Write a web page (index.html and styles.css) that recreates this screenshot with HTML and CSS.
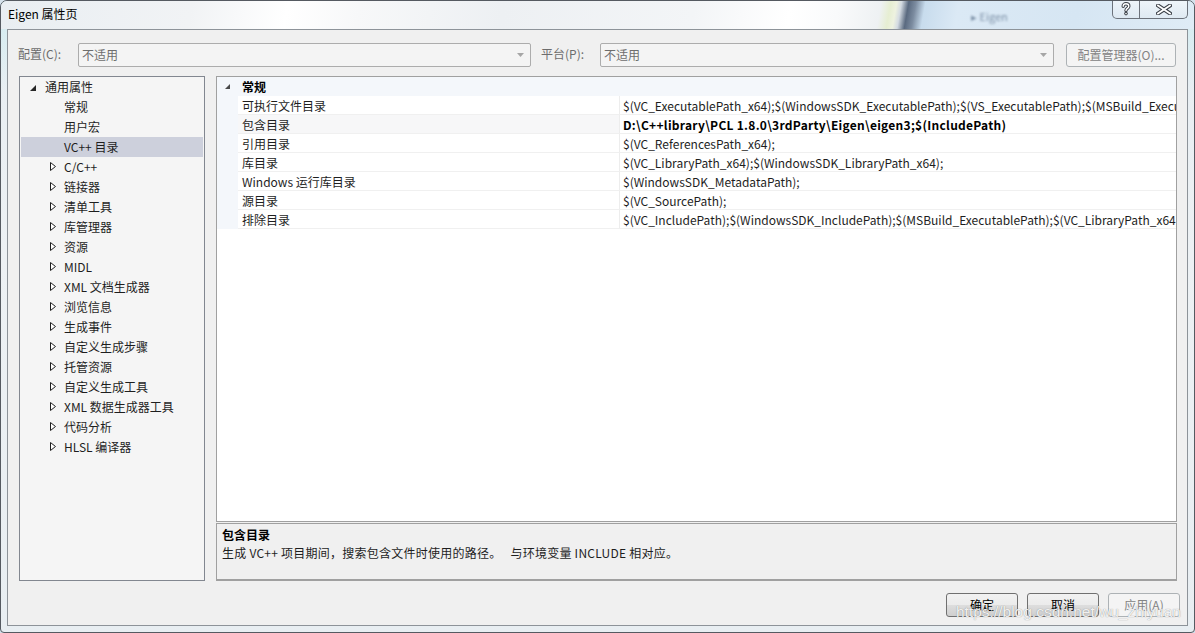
FILE: index.html
```html
<!DOCTYPE html>
<html lang="zh-CN">
<head>
<meta charset="utf-8">
<title>Eigen 属性页</title>
<link rel="stylesheet" href="styles.css">
</head>
<body>
<div class="window">
  <div class="titlebar">
    <span class="title">Eigen 属性页</span>
    <span class="ghost">▸ Eigen</span>
    <div class="caption">
      <div class="cap cap-help">
        <svg width="10" height="14" viewBox="0 0 10 14"><path d="M2.2 4.2C2.2 0.9 7.8 0.9 7.8 4.2C7.8 6.4 5 6.4 5 8.6" fill="none" stroke="#3b4048" stroke-width="3.4" stroke-linecap="round"/><circle cx="5" cy="11.6" r="1.8" fill="#3b4048"/><path d="M2.2 4.2C2.2 0.9 7.8 0.9 7.8 4.2C7.8 6.4 5 6.4 5 8.6" fill="none" stroke="#fff" stroke-width="1.4" stroke-linecap="round"/><circle cx="5" cy="11.6" r="0.8" fill="#fff"/></svg>
      </div>
      <div class="cap cap-close">
        <svg width="16" height="11" viewBox="0 0 16 11"><path d="M2 1.5L14 9.5M14 1.5L2 9.5" stroke="#3b4048" stroke-width="4" stroke-linecap="square"/><path d="M2 1.5L14 9.5M14 1.5L2 9.5" stroke="#fff" stroke-width="1.8" stroke-linecap="square"/></svg>
      </div>
    </div>
  </div>

  <div class="client">
    <div class="toolbar">
      <span class="lbl lbl-config">配置(C):</span>
      <div class="combo combo-config"><span class="combo-text">不适用</span><svg class="combo-arrow" width="7" height="4" viewBox="0 0 7 4"><path d="M0 0H7L3.5 4Z" fill="#a6a6a6"/></svg></div>
      <span class="lbl lbl-platform">平台(P):</span>
      <div class="combo combo-platform"><span class="combo-text">不适用</span><svg class="combo-arrow" width="7" height="4" viewBox="0 0 7 4"><path d="M0 0H7L3.5 4Z" fill="#a6a6a6"/></svg></div>
      <div class="btn btn-disabled btn-manager">配置管理器(O)...</div>
    </div>

    <div class="main">
      <div class="tree">
        <div class="node lvl0"><span class="exp"><svg width="6" height="6" viewBox="0 0 6 6"><path d="M6 0V6H0Z" fill="#262626"/></svg></span><span>通用属性</span></div>
        <div class="node lvl1"><span class="exp"></span><span>常规</span></div>
        <div class="node lvl1"><span class="exp"></span><span>用户宏</span></div>
        <div class="node lvl1 selected"><span class="exp"></span><span>VC++ 目录</span></div>
        <div class="node lvl1"><span class="exp"><svg class="tri" width="6" height="9" viewBox="0 0 6 9"><path d="M0.5 0.5L5.5 4.5L0.5 8.5Z" fill="#fff" stroke="#1e1e1e"/></svg></span><span>C/C++</span></div>
        <div class="node lvl1"><span class="exp"><svg class="tri" width="6" height="9" viewBox="0 0 6 9"><path d="M0.5 0.5L5.5 4.5L0.5 8.5Z" fill="#fff" stroke="#1e1e1e"/></svg></span><span>链接器</span></div>
        <div class="node lvl1"><span class="exp"><svg class="tri" width="6" height="9" viewBox="0 0 6 9"><path d="M0.5 0.5L5.5 4.5L0.5 8.5Z" fill="#fff" stroke="#1e1e1e"/></svg></span><span>清单工具</span></div>
        <div class="node lvl1"><span class="exp"><svg class="tri" width="6" height="9" viewBox="0 0 6 9"><path d="M0.5 0.5L5.5 4.5L0.5 8.5Z" fill="#fff" stroke="#1e1e1e"/></svg></span><span>库管理器</span></div>
        <div class="node lvl1"><span class="exp"><svg class="tri" width="6" height="9" viewBox="0 0 6 9"><path d="M0.5 0.5L5.5 4.5L0.5 8.5Z" fill="#fff" stroke="#1e1e1e"/></svg></span><span>资源</span></div>
        <div class="node lvl1"><span class="exp"><svg class="tri" width="6" height="9" viewBox="0 0 6 9"><path d="M0.5 0.5L5.5 4.5L0.5 8.5Z" fill="#fff" stroke="#1e1e1e"/></svg></span><span>MIDL</span></div>
        <div class="node lvl1"><span class="exp"><svg class="tri" width="6" height="9" viewBox="0 0 6 9"><path d="M0.5 0.5L5.5 4.5L0.5 8.5Z" fill="#fff" stroke="#1e1e1e"/></svg></span><span>XML 文档生成器</span></div>
        <div class="node lvl1"><span class="exp"><svg class="tri" width="6" height="9" viewBox="0 0 6 9"><path d="M0.5 0.5L5.5 4.5L0.5 8.5Z" fill="#fff" stroke="#1e1e1e"/></svg></span><span>浏览信息</span></div>
        <div class="node lvl1"><span class="exp"><svg class="tri" width="6" height="9" viewBox="0 0 6 9"><path d="M0.5 0.5L5.5 4.5L0.5 8.5Z" fill="#fff" stroke="#1e1e1e"/></svg></span><span>生成事件</span></div>
        <div class="node lvl1"><span class="exp"><svg class="tri" width="6" height="9" viewBox="0 0 6 9"><path d="M0.5 0.5L5.5 4.5L0.5 8.5Z" fill="#fff" stroke="#1e1e1e"/></svg></span><span>自定义生成步骤</span></div>
        <div class="node lvl1"><span class="exp"><svg class="tri" width="6" height="9" viewBox="0 0 6 9"><path d="M0.5 0.5L5.5 4.5L0.5 8.5Z" fill="#fff" stroke="#1e1e1e"/></svg></span><span>托管资源</span></div>
        <div class="node lvl1"><span class="exp"><svg class="tri" width="6" height="9" viewBox="0 0 6 9"><path d="M0.5 0.5L5.5 4.5L0.5 8.5Z" fill="#fff" stroke="#1e1e1e"/></svg></span><span>自定义生成工具</span></div>
        <div class="node lvl1"><span class="exp"><svg class="tri" width="6" height="9" viewBox="0 0 6 9"><path d="M0.5 0.5L5.5 4.5L0.5 8.5Z" fill="#fff" stroke="#1e1e1e"/></svg></span><span>XML 数据生成器工具</span></div>
        <div class="node lvl1"><span class="exp"><svg class="tri" width="6" height="9" viewBox="0 0 6 9"><path d="M0.5 0.5L5.5 4.5L0.5 8.5Z" fill="#fff" stroke="#1e1e1e"/></svg></span><span>代码分析</span></div>
        <div class="node lvl1"><span class="exp"><svg class="tri" width="6" height="9" viewBox="0 0 6 9"><path d="M0.5 0.5L5.5 4.5L0.5 8.5Z" fill="#fff" stroke="#1e1e1e"/></svg></span><span>HLSL 编译器</span></div>
      </div>

      <div class="right">
        <div class="grid">
          <div class="cat"><span class="cat-exp"><svg width="5" height="5" viewBox="0 0 5 5"><path d="M5 0V5H0Z" fill="#4a4a4a"/></svg></span><span class="cat-name">常规</span></div>
          <div class="prow"><span class="gut"></span><span class="pname">可执行文件目录</span><span class="pval">$(VC_ExecutablePath_x64);$(WindowsSDK_ExecutablePath);$(VS_ExecutablePath);$(MSBuild_ExecutablePath);$(FxCopDir);$(PATH);</span></div>
          <div class="prow active"><span class="gut"></span><span class="pname">包含目录</span><span class="pval bold">D:\C++library\PCL 1.8.0\3rdParty\Eigen\eigen3;$(IncludePath)</span></div>
          <div class="prow"><span class="gut"></span><span class="pname">引用目录</span><span class="pval">$(VC_ReferencesPath_x64);</span></div>
          <div class="prow"><span class="gut"></span><span class="pname">库目录</span><span class="pval">$(VC_LibraryPath_x64);$(WindowsSDK_LibraryPath_x64);</span></div>
          <div class="prow"><span class="gut"></span><span class="pname">Windows 运行库目录</span><span class="pval">$(WindowsSDK_MetadataPath);</span></div>
          <div class="prow"><span class="gut"></span><span class="pname">源目录</span><span class="pval">$(VC_SourcePath);</span></div>
          <div class="prow"><span class="gut"></span><span class="pname">排除目录</span><span class="pval">$(VC_IncludePath);$(WindowsSDK_IncludePath);$(MSBuild_ExecutablePath);$(VC_LibraryPath_x64);</span></div>
        </div>
        <div class="desc">
          <div class="desc-title">包含目录</div>
          <div class="desc-text">生成 VC++ 项目期间，搜索包含文件时使用的路径。&nbsp;&nbsp; 与环境变量 INCLUDE 相对应。</div>
        </div>
      </div>
    </div>

    <div class="footer">
      <div class="btn">确定</div>
      <div class="btn">取消</div>
      <div class="btn btn-disabled">应用(A)</div>
    </div>
  </div>

  <div class="watermark">https://blog.csdn.net/wu_zhiyuan</div>
</div>
</body>
</html>
```

FILE: styles.css
```css
* { box-sizing: border-box; }

html, body {
  margin: 0;
  padding: 0;
}

body {
  width: 1195px;
  height: 633px;
  overflow: hidden;
  background: #d5e2ec;
  font-family: "Noto Sans CJK SC", "Microsoft YaHei", sans-serif;
  font-size: 12px;
  color: #1e1e1e;
}

.window {
  position: relative;
  width: 1195px;
  height: 633px;
  border: 1px solid #555a61;
  border-radius: 7px 7px 4px 4px;
  background:
    linear-gradient(to bottom, rgba(200, 236, 240, 0.7) 0px, rgba(230, 240, 244, 0) 90px),
    linear-gradient(to bottom, #e6edf2 0%, #edf1f4 40%, #e8eef2 100%);
  display: flex;
  flex-direction: column;
  overflow: hidden;
}

/* ---------- title bar ---------- */
.titlebar {
  position: relative;
  height: 28px;
  flex: none;
  display: flex;
  align-items: center;
  padding: 0 0 3px 7px;
  background: linear-gradient(100deg,
    #e9eef2 0%, #f1f3f5 16%, #ffffff 24%, #f7f8f9 30%, #edf0f3 42%,
    #f3f5f7 58%, #ffffff 66%, #f9fafb 70%, #eef1f3 73.5%,
    #e6eed2 74.3%, #eef2e0 74.8%, #d4dbe2 75.2%, #5a6a80 75.8%, #7c8ca0 76.4%,
    #c8dced 77.2%, #dbe9f5 80%, #d6e6f3 90%, #dfecf6 100%);
}

.title {
  color: #000;
  font-size: 12px;
  line-height: 16px;
}

.ghost {
  position: absolute;
  left: 970px;
  top: 7px;
  font-size: 11px;
  color: #7f93a9;
  filter: blur(1.2px);
}

.caption {
  position: absolute;
  top: -1px;
  right: 6px;
  width: 76px;
  height: 19px;
  display: flex;
  border: 1px solid #6c727b;
  border-top: none;
  border-radius: 0 0 5px 5px;
  overflow: hidden;
  background: linear-gradient(to bottom, rgba(255,255,255,0.55), rgba(225,233,240,0.55));
}

.cap {
  display: flex;
  align-items: center;
  justify-content: center;
}

.cap-help {
  width: 27px;
  border-right: 1px solid #6c727b;
}

.cap-close {
  flex: 1;
}

/* ---------- client ---------- */
.client {
  flex: 1;
  margin: 0 6px 6px 6px;
  border: 1px solid #8d9399;
  background: #f0f0f0;
  display: flex;
  flex-direction: column;
}

.toolbar {
  margin-top: 13px;
  height: 24px;
  padding-left: 10px;
  display: flex;
  align-items: center;
}

.lbl {
  color: #6d6d6d;
  line-height: 22px;
  padding-bottom: 2px;
}

.lbl-config { width: 60px; }

.lbl-platform {
  width: 59px;
  margin-left: 10px;
}

.combo {
  height: 24px;
  border: 1px solid #acacac;
  border-radius: 2px;
  background: #f4f4f4;
  display: flex;
  align-items: center;
  justify-content: space-between;
  padding: 0 6px 1px 3px;
}

.combo-config { width: 453px; }
.combo-platform { width: 454px; }

.combo-text { color: #6d6d6d; }

.btn {
  width: 72px;
  height: 24px;
  border: 1px solid #707070;
  border-radius: 3px;
  background: linear-gradient(to bottom, #f2f2f2 0%, #ebebeb 50%, #dddddd 51%, #cfcfcf 100%);
  display: flex;
  align-items: center;
  justify-content: center;
  padding-bottom: 1px;
  color: #000;
}

.btn-disabled {
  border-color: #adb2b5;
  background: #f4f4f4;
  color: #838383;
}

.btn-manager {
  width: 110px;
  margin-left: 12px;
}

/* ---------- main area ---------- */
.main {
  margin-top: 9px;
  height: 505px;
  padding-left: 11px;
  display: flex;
  gap: 11px;
}

.tree {
  width: 186px;
  height: 505px;
  border: 1px solid #828790;
  background: #f5f5f5;
  padding: 0 1px;
}

.node {
  height: 20px;
  display: flex;
  align-items: center;
  padding-bottom: 2px;
  white-space: nowrap;
}

.node.lvl0 { padding-left: 8px; }
.node.lvl1 { padding-left: 27px; }

.exp {
  width: 16px;
  height: 18px;
  display: flex;
  align-items: center;
  flex: none;
}

.lvl0 .exp svg { margin-left: 1px; margin-top: 3px; }
.lvl1 .exp .tri { margin-left: 2px; margin-top: 1px; }

.node.selected { background: #cdd0dc; }

.right {
  width: 961px;
  display: flex;
  flex-direction: column;
  gap: 1px;
}

.grid {
  height: 446px;
  border: 1px solid #a0a0a0;
  background: #ffffff;
  overflow: hidden;
}

.cat {
  height: 19px;
  background: #f4f7fb;
  display: flex;
  align-items: center;
  padding-left: 8px;
}

.cat-exp {
  width: 17px;
  display: flex;
  align-items: center;
}

.cat-name {
  font-weight: bold;
  color: #000;
}

.prow {
  height: 19px;
  display: grid;
  grid-template-columns: 21px 382px 1fr;
}

.gut { background: #f4f7fb; }

.pname, .pval {
  border-bottom: 1px solid #f0f0f0;
  white-space: nowrap;
  overflow: hidden;
  padding-top: 2px;
  line-height: 16px;
}

.pname {
  padding-left: 4px;
  border-right: 1px solid #ededed;
}

.pval { padding-left: 3px; }

.prow.active .pname { background: #f7f7f8; }

.pval.bold {
  font-weight: bold;
  color: #000;
  letter-spacing: 0.28px;
}

.desc {
  height: 58px;
  border: 1px solid #a0a0a0;
  border-bottom: 2px solid #a0a0a0;
  background: #f0f0f0;
  padding: 2px 0 0 5px;
}

.desc-title {
  font-weight: bold;
  color: #000;
  line-height: 18px;
}

.desc-text {
  line-height: 18px;
  letter-spacing: 0.25px;
}

/* ---------- footer ---------- */
.footer {
  margin-top: 12px;
  padding-right: 7px;
  display: flex;
  justify-content: flex-end;
  gap: 9px;
}

/* ---------- watermark ---------- */
.watermark {
  position: absolute;
  left: 955px;
  top: 602px;
  font-family: "Liberation Sans", Arial, sans-serif;
  font-size: 15.5px;
  line-height: 18px;
  color: rgba(255, 255, 255, 0.9);
  text-shadow: 0 0 1px rgba(80, 80, 80, 0.7);
  pointer-events: none;
}
```
